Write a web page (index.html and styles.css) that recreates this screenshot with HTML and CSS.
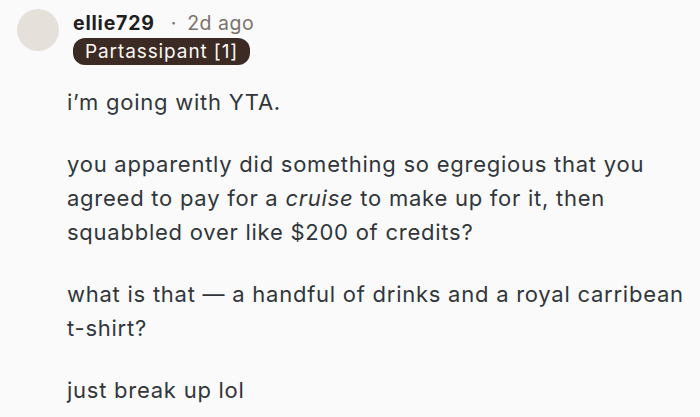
FILE: index.html
```html
<!DOCTYPE html>
<html>
<head>
<meta charset="utf-8">
<link rel="stylesheet" href="styles.css">
</head>
<body>
<div class="comment">
  <div class="header">
    <div class="avatar"></div>
    <div class="meta">
      <div class="line">
        <span class="user">ellie729</span>
        <span class="dot">·</span>
        <span class="time">2d ago</span>
      </div>
      <span class="flair">Partassipant [1]</span>
    </div>
  </div>
  <div class="body">
    <p>i’m going with YTA.</p>
    <p>you apparently did something so egregious that you agreed to pay for a <em>cruise</em> to make up for it, then squabbled over like $200 of credits?</p>
    <p>what is that — a handful of drinks and a royal carribean t-shirt?</p>
    <p>just break up lol</p>
  </div>
</div>
</body>
</html>
```
FILE: styles.css
```css
html, body {
  margin: 0;
  padding: 0;
  background: #fbfafa;
}
body {
  font-family: Inter, "Noto Sans", sans-serif;
  color: #30363b;
}
.comment {
  padding: 9px 0 0 17px;
}
.header {
  display: flex;
  gap: 14px;
}
.avatar {
  width: 42px;
  height: 42px;
  border-radius: 50%;
  background: #e6e0da;
  flex: none;
}
.meta {
  display: flex;
  flex-direction: column;
  align-items: flex-start;
}
.line {
  display: flex;
  align-items: baseline;
  font-size: 19.5px;
  line-height: 28px;
  letter-spacing: 0.8px;
}
.user {
  font-weight: 700;
  color: #1e1e1e;
}
.dot {
  color: #7a726c;
  margin: 0 10px 0 16px;
}
.time {
  color: #7a726c;
  letter-spacing: 0.5px;
}
.flair {
  display: inline-block;
  background: #3c2b24;
  color: #fbf8f4;
  font-size: 19px;
  line-height: 27px;
  letter-spacing: 0.9px;
  padding: 0 12px;
  border-radius: 12px;
  margin-top: 1px;
}
.body {
  padding-left: 50px;
  padding-right: 10px;
  font-size: 22px;
  line-height: 34px;
  letter-spacing: 0.75px;
  margin-top: 20px;
}
.body p {
  margin: 0 0 28px 0;
}
.body em {
  font-style: italic;
}
```
